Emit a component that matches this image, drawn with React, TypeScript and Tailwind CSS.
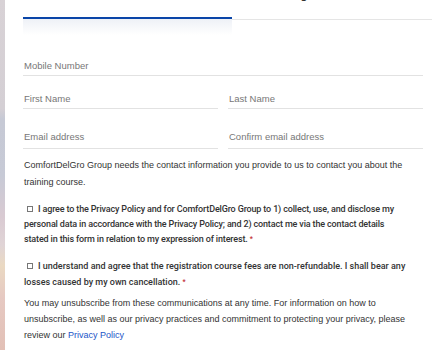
import React from "react"

const sans = "font-['Liberation_Sans',Arial,sans-serif]"
const roboto = "font-['Roboto','Liberation_Sans',sans-serif]"

function Field({ label, pad, className = "" }: { label: string; pad: string; className?: string }) {
  return (
    <div className={`h-[24px] flex items-end border-b border-[#e2e2e2] ${pad} ${className}`}>
      <span className="pl-[1px] text-[9.5px] leading-[12px] text-[#777]">{label}</span>
    </div>
  )
}

function Box() {
  return <span className="inline-block w-[6px] h-[6px] border border-[#777] ml-[3px] mr-[5px] align-[0px]" />
}

export default function App() {
  return (
    <div className={`w-[435px] h-[350px] overflow-hidden flex bg-white ${sans}`}>
      <div className="w-[5px] shrink-0 bg-[linear-gradient(180deg,#d8d2d6_0%,#d4cfd4_31%,#c6c9d5_34%,#c7cad6_50%,#d9cad2_62%,#e0d4d6_70%,#ead9c2_76%,#e6c9c2_85%,#e2c0b6_100%)]" />
      <div className="flex-1 flex flex-col pl-[18px] pr-[12px]">
        {/* tabs */}
        <div className="flex -mt-[11px] mr-[-9px]">
          <div className="w-[209px] relative">
            <div className="text-center text-[11px] leading-[13px] font-bold text-[#333] pb-[15px] border-b-2 border-[#0a45a8]">
              Create An Account
            </div>
            <div className="absolute left-0 right-0 top-full h-[16px] bg-gradient-to-b from-[#eef1f7] to-transparent" />
          </div>
          <div className="flex-1 text-center text-[11px] leading-[13px] font-bold text-[#333] pb-[16px] border-b border-[#e5e5e5] relative top-[1px] -mt-[1px]">
            Login to Account
          </div>
        </div>

        <Field label="Mobile Number" pad="pb-[3px]" className="mt-[33px]" />
        <div className="flex gap-[10px] mt-[9px]">
          <Field label="First Name" pad="pb-[3px]" className="flex-1" />
          <Field label="Last Name" pad="pb-[3px]" className="flex-1" />
        </div>
        <div className="flex gap-[10px] mt-[16px]">
          <Field label="Email address" pad="pb-[5px]" className="flex-1" />
          <Field label="Confirm email address" pad="pb-[5px]" className="flex-1" />
        </div>

        <p className="mt-[8px] text-[9px] leading-[17px] text-[#333] pl-[1px]">
          ComfortDelGro Group needs the contact information you provide to us to contact you about the training course.
        </p>

        <p className={`mt-[11px] pr-[20px] text-[9px] leading-[15px] tracking-[-0.15px] font-medium text-[#333] pl-[1px] ${roboto}`}>
          <Box />
          I agree to the Privacy Policy and for ComfortDelGro Group to 1) collect, use, and disclose my personal data
          in accordance with the Privacy Policy; and 2) contact me via the contact details stated in this form in
          relation to my expression of interest. <span className="text-[#c0262d] text-[7px] align-top">*</span>
        </p>

        <p className={`mt-[11px] text-[9px] leading-[16px] font-medium text-[#333] pl-[1px] ${roboto}`}>
          <Box />
          I understand and agree that the registration course fees are non-refundable. I shall bear any losses caused
          by my own cancellation. <span className="text-[#c0262d] text-[7px] align-top">*</span>
        </p>

        <p className="mt-[5px] text-[9px] leading-[16px] text-[#333] pl-[1px]">
          You may unsubscribe from these communications at any time. For information on how to unsubscribe, as well as
          our privacy practices and commitment to protecting your privacy, please review our{" "}
          <a className="text-[#1a55c8]">Privacy Policy</a>
        </p>
      </div>
    </div>
  )
}
